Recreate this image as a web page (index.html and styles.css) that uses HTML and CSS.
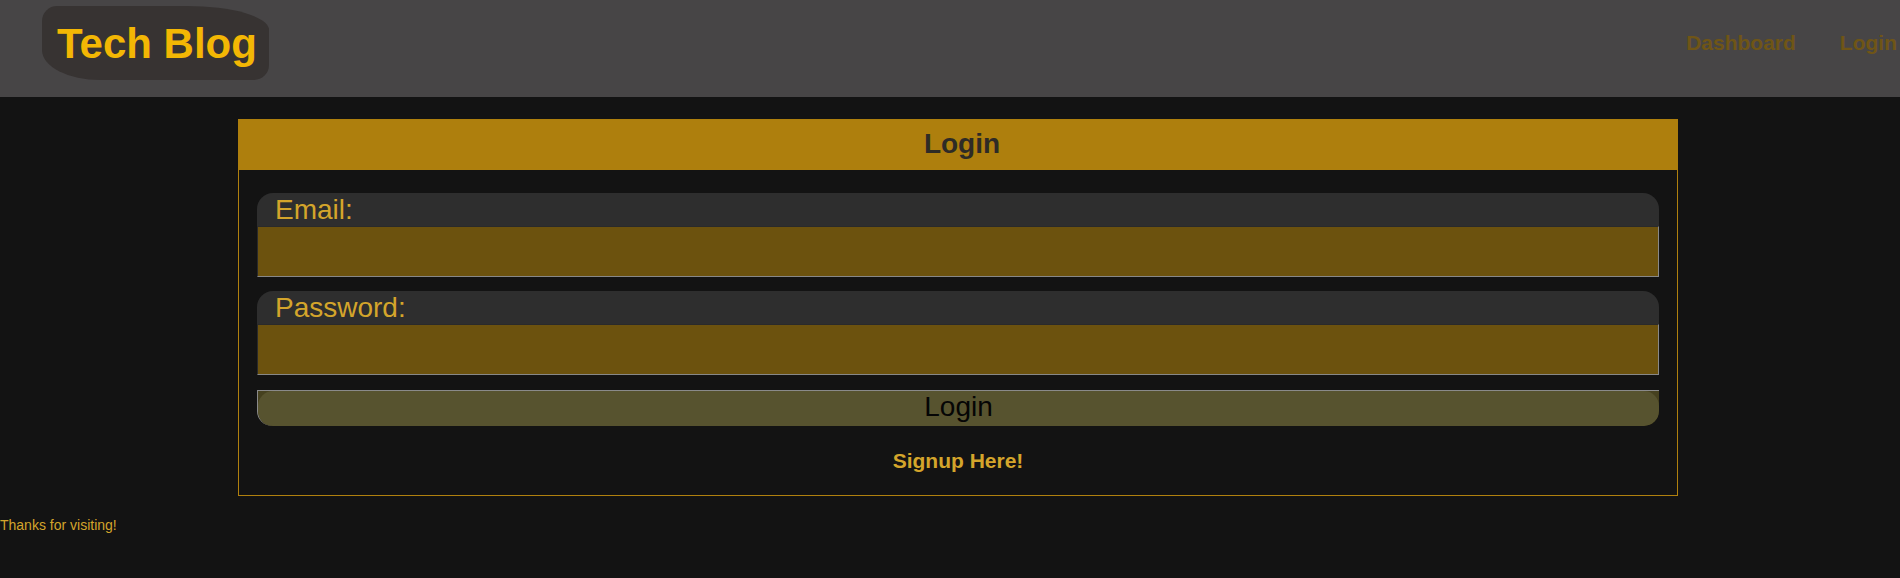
FILE: index.html
```html
<!DOCTYPE html>
<html lang="en">
<head>
<meta charset="utf-8">
<title>Tech Blog</title>
<link rel="stylesheet" href="styles.css">
</head>
<body>
<header class="topbar">
  <a class="logo" href="#">Tech Blog</a>
  <nav class="nav">
    <a href="#" class="nav-link">Dashboard</a>
    <a href="#" class="nav-link">Login</a>
  </nav>
</header>
<main class="main">
  <section class="card">
    <h2 class="card-title">Login</h2>
    <form class="card-body">
      <div class="field">
        <label class="field-label" for="email">Email:</label>
        <input class="field-input" id="email" type="email">
      </div>
      <div class="field">
        <label class="field-label" for="password">Password:</label>
        <input class="field-input" id="password" type="password">
      </div>
      <button class="btn" type="button"><span class="btn-face">Login</span></button>
      <a class="signup" href="#">Signup Here!</a>
    </form>
  </section>
</main>
<footer class="footer">Thanks for visiting!</footer>
</body>
</html>
```
FILE: styles.css
```css
* { box-sizing: border-box; }
html, body { margin: 0; padding: 0; }
body {
  background: #131313;
  font-family: "Liberation Sans", Arial, sans-serif;
  width: 1900px;
  height: 578px;
  overflow: hidden;
}
a { text-decoration: none; }

.topbar {
  height: 97px;
  background: #474546;
  display: flex;
  align-items: flex-start;
  justify-content: space-between;
  padding: 6px 3px 0 42px;
}
.logo {
  display: block;
  height: 74px;
  width: 227px;
  padding: 14px 0 0 15px;
  background: #373332;
  color: #f3b704;
  font-weight: bold;
  font-size: 42px;
  line-height: 47px;
  border-radius: 15px 82px 15px 58px / 15px 24px 15px 30px;
}
.nav {
  display: flex;
  gap: 44px;
  padding-top: 25px;
}
.nav-link {
  color: #6f5516;
  font-weight: bold;
  font-size: 21px;
  line-height: 24px;
}

.main {
  padding: 22px 0 0 238px;
}
.card {
  width: 1440px;
  border: 1px solid #b0800e;
}
.card-title {
  margin: -1px -1px 0;
  height: 51px;
  background: #ae7f0d;
  color: #2e2b26;
  font-size: 28px;
  font-weight: bold;
  line-height: 49px;
  text-align: center;
  padding-left: 8px;
}
.card-body {
  display: flex;
  flex-direction: column;
  padding: 23px 18px 0;
  height: 325px;
}
.field {
  display: flex;
  flex-direction: column;
  margin-bottom: 14px;
}
.field-label {
  background: #2e2e2e;
  color: #d4a52b;
  font-size: 28px;
  line-height: 33px;
  height: 33px;
  padding-left: 18px;
  border-radius: 16px 16px 0 0;
}
.field-input {
  height: 51px;
  margin: 0;
  background: #6c520e;
  border: 1px solid;
  border-color: #2a2a2a #888888 #888888 #2a2a2a;
  outline: none;
}
.btn {
  display: block;
  margin: 1px 0 0;
  padding: 0;
  height: 36px;
  background: #46411f;
  border: none;
  border-top: 1px solid #8a8a8a;
  border-left: 1px solid #8a8a8a;
  border-radius: 0 0 15px 15px;
  overflow: hidden;
  font-family: inherit;
  cursor: pointer;
}
.btn-face {
  display: block;
  height: 100%;
  background: #57532f;
  border-radius: 15px;
  color: #050505;
  font-size: 28px;
  line-height: 31px;
  text-align: center;
}
.signup {
  align-self: center;
  margin-top: 23px;
  color: #d4a52b;
  font-weight: bold;
  font-size: 21px;
  line-height: 24px;
}

.footer {
  padding-top: 21px;
  color: #d4a52b;
  font-size: 14px;
  line-height: 16px;
}
```
